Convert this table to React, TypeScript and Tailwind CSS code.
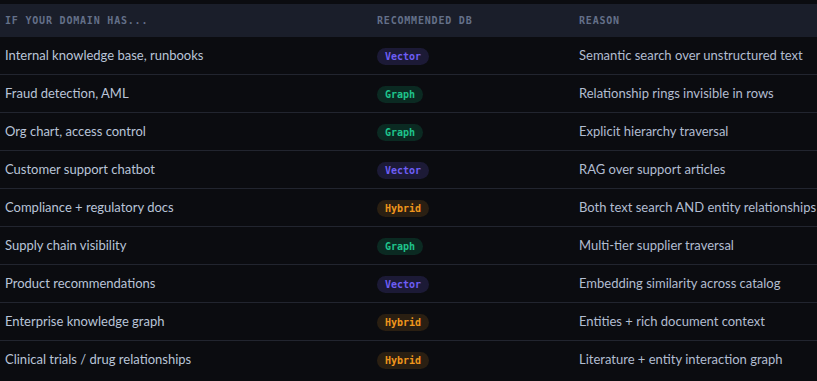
import React from 'react';

type Db = 'Vector' | 'Graph' | 'Hybrid';

interface Row {
  domain: string;
  db: Db;
  reason: string;
}

const rows: Row[] = [
  { domain: 'Internal knowledge base, runbooks', db: 'Vector', reason: 'Semantic search over unstructured text' },
  { domain: 'Fraud detection, AML', db: 'Graph', reason: 'Relationship rings invisible in rows' },
  { domain: 'Org chart, access control', db: 'Graph', reason: 'Explicit hierarchy traversal' },
  { domain: 'Customer support chatbot', db: 'Vector', reason: 'RAG over support articles' },
  { domain: 'Compliance + regulatory docs', db: 'Hybrid', reason: 'Both text search AND entity relationships' },
  { domain: 'Supply chain visibility', db: 'Graph', reason: 'Multi-tier supplier traversal' },
  { domain: 'Product recommendations', db: 'Vector', reason: 'Embedding similarity across catalog' },
  { domain: 'Enterprise knowledge graph', db: 'Hybrid', reason: 'Entities + rich document context' },
  { domain: 'Clinical trials / drug relationships', db: 'Hybrid', reason: 'Literature + entity interaction graph' },
];

const badgeStyles: Record<Db, string> = {
  Vector: 'bg-[#1c1a36] text-[#6d5ef5]',
  Graph: 'bg-[#0b2a22] text-[#1fc48c]',
  Hybrid: 'bg-[#2a1f12] text-[#f0961c]',
};

const Badge = ({ db }: { db: Db }) => (
  <span
    className={`inline-flex items-center h-[17px] px-2 rounded-full text-[10px] font-bold font-['DejaVu_Sans_Mono',monospace] ${badgeStyles[db]}`}
  >
    {db}
  </span>
);

export default function App() {
  return (
    <div className="min-h-screen w-[817px] bg-[#0b0c10] pt-1 font-['Lato',sans-serif]">
      {/* Header */}
      <div className="grid grid-cols-[372px_202px_1fr] h-[33px] items-center bg-[#1a1e2a] text-[10px] font-bold tracking-[0.08em] text-[#647089] font-['DejaVu_Sans_Mono',monospace]">
        <div className="pl-[5px]">IF YOUR DOMAIN HAS...</div>
        <div className="pl-[5px]">RECOMMENDED DB</div>
        <div className="pl-[5px]">REASON</div>
      </div>

      {/* Rows */}
      {rows.map((row, i) => (
        <div
          key={row.domain}
          className={`grid grid-cols-[372px_202px_1fr] h-[38px] items-center text-[13px] ${
            i < rows.length - 1 ? 'border-b border-[#22252f]' : ''
          }`}
        >
          <div className="pl-[5px] text-[#b9c4d8]">{row.domain}</div>
          <div className="pl-[5px]">
            <Badge db={row.db} />
          </div>
          <div className="pl-[5px] text-[#b2bdd1] whitespace-nowrap">{row.reason}</div>
        </div>
      ))}
    </div>
  );
}
